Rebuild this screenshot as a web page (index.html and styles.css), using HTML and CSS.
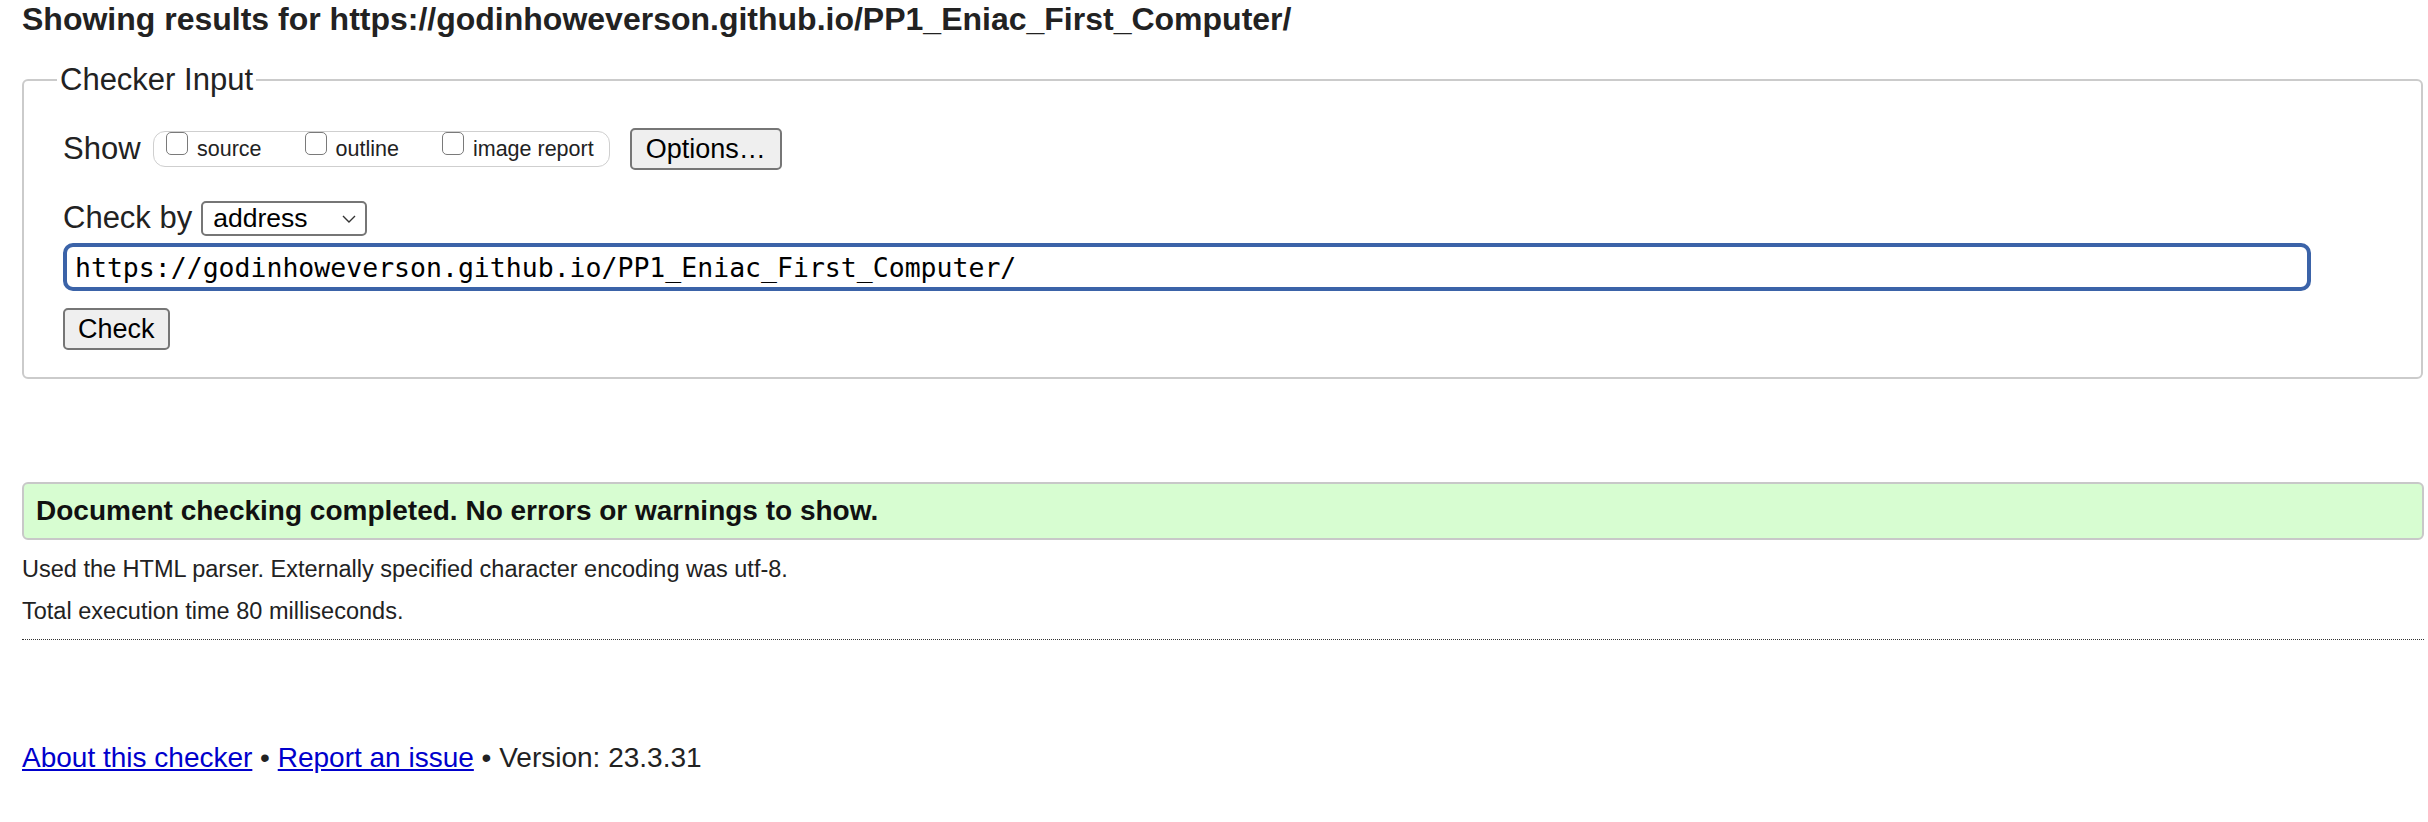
FILE: index.html
```html
<!DOCTYPE html>
<html lang="en">
<head>
<meta charset="utf-8">
<title>Showing results for https://godinhoweverson.github.io/PP1_Eniac_First_Computer/</title>
<link rel="stylesheet" href="styles.css">
</head>
<body>
<h2 class="title">Showing results for https://godinhoweverson.github.io/PP1_Eniac_First_Computer/</h2>
<fieldset class="checker">
  <legend class="legend">Checker Input</legend>
  <div class="row show-row">
    <span class="label">Show</span>
    <span class="group">
      <label class="opt"><span class="box"></span>source</label>
      <label class="opt"><span class="box"></span>outline</label>
      <label class="opt"><span class="box"></span>image report</label>
    </span>
    <button class="btn options" type="button">Options…</button>
  </div>
  <div class="row by-row">
    <span class="label">Check by</span>
    <span class="select">address<svg class="chev" width="14" height="8" viewBox="0 0 14 8"><polyline points="1,1 7,7 13,1" fill="none" stroke="#333" stroke-width="1.4"/></svg></span>
  </div>
  <input class="url" type="text" value="https://godinhoweverson.github.io/PP1_Eniac_First_Computer/">
  <button class="btn check" type="button">Check</button>
</fieldset>
<div class="success">Document checking completed. No errors or warnings to show.</div>
<p class="info first">Used the HTML parser. Externally specified character encoding was utf-8.</p>
<p class="info">Total execution time 80 milliseconds.</p>
<hr class="sep">
<p class="footer"><a class="link" href="#">About this checker</a> • <a class="link" href="#">Report an issue</a> • Version: 23.3.31</p>
</body>
</html>
```
FILE: styles.css
```css
body {
  margin: 0;
  padding: 0 4px 0 22px;
  font-family: "Liberation Sans", Arial, sans-serif;
  color: #222;
  background: #fff;
}
.title {
  margin: 0;
  font-size: 32px;
  line-height: 38px;
  font-weight: bold;
  color: #222;
}
.checker {
  margin: 24px 1px 0 0;
  padding: 30px 110px 27px 39px;
  border: 2px solid #cbcbcb;
  border-radius: 6px;
  min-width: 0;
}
.legend {
  font-size: 31px;
  line-height: 36px;
  padding: 0 3px;
  margin-left: -6px;
  color: #222;
}
.row {
  display: flex;
  align-items: center;
}
.show-row {
  height: 42px;
}
.label {
  font-size: 31px;
  line-height: 36px;
}
.group {
  display: flex;
  align-items: center;
  height: 36px;
  box-sizing: border-box;
  margin-left: 12px;
  padding: 0 15px 0 12.5px;
  border: 1.5px solid #cfcfcf;
  border-radius: 12px;
}
.opt {
  display: flex;
  align-items: center;
  font-size: 21.5px;
  line-height: 25px;
  margin-right: 43px;
  color: #222;
}
.opt:last-child {
  margin-right: 0;
}
.box {
  width: 22px;
  height: 23px;
  box-sizing: border-box;
  border: 1.5px solid #7a7a7a;
  border-radius: 5px;
  margin: 0 9px 11px 0;
  background: #fff;
}
.btn {
  font-family: "Liberation Sans", Arial, sans-serif;
  font-size: 27px;
  height: 42px;
  padding: 0 14px;
  border: 2px solid #767676;
  border-radius: 5px;
  background: #efefef;
  color: #000;
  box-sizing: border-box;
}
.options {
  margin-left: 20px;
}
.by-row {
  margin-top: 30px;
  height: 36px;
}
.select {
  margin-left: 9px;
  width: 166px;
  height: 35px;
  box-sizing: border-box;
  border: 2px solid #767676;
  border-radius: 5px;
  display: flex;
  align-items: center;
  justify-content: space-between;
  padding: 0 9px 0 10px;
  font-size: 26.5px;
  color: #000;
}
.chev {
  margin-top: 2px;
}
.url {
  display: block;
  margin-top: 7px;
  width: 100%;
  height: 48px;
  box-sizing: border-box;
  border: 4px solid #3b63a8;
  border-radius: 10px;
  padding: 0 8px;
  font-family: "DejaVu Sans Mono", monospace;
  font-size: 26.5px;
  color: #000;
  outline: none;
  background: #fff;
}
.check {
  display: block;
  margin-top: 17px;
  padding: 0 13px;
}
.success {
  margin-top: 103px;
  height: 58px;
  box-sizing: border-box;
  border: 2px solid #c8c8c8;
  border-radius: 6px;
  background: #d7fdd1;
  padding: 0 12px;
  display: flex;
  align-items: center;
  font-weight: bold;
  font-size: 28px;
  color: #111;
}
.info {
  margin: 14px 0 0;
  font-size: 23.5px;
  line-height: 28px;
}
.info.first {
  margin-top: 15px;
}
.sep {
  margin: 14px 0 0;
  border: 0;
  border-top: 1px dotted #333;
  height: 0;
}
.footer {
  margin: 102px 0 0;
  font-size: 28px;
  line-height: 32px;
}
.link {
  color: #0000cc;
}
```
